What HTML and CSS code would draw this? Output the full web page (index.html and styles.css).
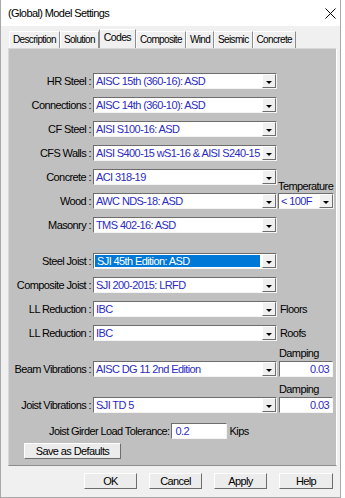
FILE: index.html
```html
<!DOCTYPE html>
<html lang="en">
<head>
  <meta charset="UTF-8">
  <title>(Global) Model Settings</title>
  <link rel="stylesheet" href="styles.css">
</head>
<body>

  <div class="window">
    <div class="titlebar">
      <span class="title">(Global) Model Settings</span>
      <svg class="close" width="11" height="11" viewBox="0 0 11 11">
        <path d="M0.5 0.5 L10.5 10.5 M10.5 0.5 L0.5 10.5" stroke="#000" stroke-width="1" fill="none"/>
      </svg>
    </div>

    <div class="tabs">
      <div class="tab">Description</div>
      <div class="tab">Solution</div>
      <div class="tab active">Codes</div>
      <div class="tab">Composite</div>
      <div class="tab">Wind</div>
      <div class="tab">Seismic</div>
      <div class="tab">Concrete</div>
    </div>

    <div class="panel">
      <div class="row">
        <span class="lbl">HR Steel :</span>
        <div class="combo"><span class="val">AISC 15th (360-16): ASD</span><span class="drop"></span></div>
        <span></span>
      </div>
      <div class="row">
        <span class="lbl">Connections :</span>
        <div class="combo"><span class="val">AISC 14th (360-10): ASD</span><span class="drop"></span></div>
        <span></span>
      </div>
      <div class="row">
        <span class="lbl">CF Steel :</span>
        <div class="combo"><span class="val">AISI S100-16: ASD</span><span class="drop"></span></div>
        <span></span>
      </div>
      <div class="row">
        <span class="lbl">CFS Walls :</span>
        <div class="combo"><span class="val">AISI S400-15 wS1-16 &amp; AISI S240-15</span><span class="drop"></span></div>
        <span></span>
      </div>
      <div class="row">
        <span class="lbl">Concrete :</span>
        <div class="combo"><span class="val">ACI 318-19</span><span class="drop"></span></div>
        <span class="caption temp">Temperature</span>
      </div>
      <div class="row">
        <span class="lbl">Wood :</span>
        <div class="combo"><span class="val">AWC NDS-18: ASD</span><span class="drop"></span></div>
        <div class="combo small"><span class="val">&lt; 100F</span><span class="drop"></span></div>
      </div>
      <div class="row">
        <span class="lbl">Masonry :</span>
        <div class="combo"><span class="val">TMS 402-16: ASD</span><span class="drop"></span></div>
        <span></span>
      </div>

      <div class="row gap-lg">
        <span class="lbl">Steel Joist :</span>
        <div class="combo"><span class="val selected">SJI 45th Edition: ASD</span><span class="drop"></span></div>
        <span></span>
      </div>
      <div class="row">
        <span class="lbl">Composite Joist :</span>
        <div class="combo"><span class="val">SJI 200-2015: LRFD</span><span class="drop"></span></div>
        <span></span>
      </div>
      <div class="row">
        <span class="lbl">LL Reduction :</span>
        <div class="combo"><span class="val">IBC</span><span class="drop"></span></div>
        <span class="side">Floors</span>
      </div>
      <div class="row">
        <span class="lbl">LL Reduction :</span>
        <div class="combo"><span class="val">IBC</span><span class="drop"></span></div>
        <span class="side">Roofs</span>
      </div>

      <div class="row note">
        <span></span><span></span><span class="caption">Damping</span>
      </div>
      <div class="row tight">
        <span class="lbl">Beam Vibrations :</span>
        <div class="combo"><span class="val">AISC DG 11 2nd Edition</span><span class="drop"></span></div>
        <div class="field num">0.03</div>
      </div>
      <div class="row note">
        <span></span><span></span><span class="caption">Damping</span>
      </div>
      <div class="row tight">
        <span class="lbl">Joist Vibrations :</span>
        <div class="combo"><span class="val">SJI TD 5</span><span class="drop"></span></div>
        <div class="field num">0.03</div>
      </div>

      <div class="girder">
        <span>Joist Girder Load Tolerance:</span>
        <div class="field girder-val">0.2</div>
        <span class="unit">Kips</span>
      </div>

      <button class="btn save">Save as Defaults</button>
    </div>

    <div class="buttons">
      <button class="btn">OK</button>
      <button class="btn">Cancel</button>
      <button class="btn">Apply</button>
      <button class="btn help">Help</button>
    </div>
  </div>

</body>
</html>
```

FILE: styles.css
```css
body {
  margin: 0;
  background: #fff;
  font-family: "Liberation Sans", Arial, sans-serif;
  font-size: 11px;
  letter-spacing: -0.6px;
  color: #000;
}
.window {
  width: 341px;
  height: 498px;
  box-sizing: border-box;
  background: #f0f0f0;
  border-left: 1px solid #a8a8a8;
  border-right: 1px solid #a8a8a8;
  border-bottom: 1px solid #a8a8a8;
}
.titlebar {
  height: 26px;
  background: #fff;
  display: flex;
  align-items: center;
  justify-content: space-between;
  padding: 0 4px 0 7px;
}
.title {
  font-size: 11px;
}
.tabs {
  display: flex;
  align-items: flex-end;
  height: 18px;
  padding: 4px 0 0 8px;
}
.tab {
  height: 16px;
  line-height: 16px;
  padding: 0 3px 0 3px;
  font-size: 10px;
  letter-spacing: -0.65px;
  border-left: 1px solid #fff;
  border-top: 1px solid #fff;
  border-right: 1px solid #8c8c8c;
}
.tab.active {
  height: 18px;
  line-height: 15px;
  font-size: 10.5px;
  padding: 0 4px;
  border-left: 1px solid #8c8c8c;
}
.panel {
  margin-left: 7px;
  width: 329px;
  height: 418px;
  box-sizing: border-box;
  background: #c0c0c0;
  border-top: 1px solid #d8d8d8;
  border-left: 1px solid #d8d8d8;
  border-right: 1px solid #fff;
  border-bottom: 1px solid #8c8c8c;
  padding-top: 24px;
}
.row {
  display: grid;
  grid-template-columns: 84px 184px 57px;
  height: 16px;
  margin-top: 8px;
}
.row:first-child {
  margin-top: 0;
}
.row.gap-lg {
  margin-top: 20px;
}
.row.note {
  height: 12px;
  margin-top: 6px;
}
.row.tight {
  margin-top: 2px;
}
.lbl {
  text-align: right;
  padding-right: 2px;
  line-height: 16px;
  white-space: nowrap;
}
.combo {
  display: flex;
  height: 16px;
  box-sizing: border-box;
  background: #fff;
  border: 1px solid;
  border-color: #6d6d6d #f4f4f4 #f4f4f4 #6d6d6d;
}
.combo.small {
  width: 56px;
  margin-left: 1px;
}
.val {
  flex: 1;
  color: #2b2bc4;
  line-height: 14px;
  padding-left: 2px;
  white-space: nowrap;
  overflow: hidden;
}
.val.selected {
  background: #0078d7;
  color: #fff;
  margin: 1px 1px 1px 1px;
  line-height: 12px;
}
.drop {
  width: 12px;
  height: 12px;
  margin: 0 0 0 1px;
  background: #f0f0f0;
  border: 1px solid;
  border-color: #fff #6d6d6d #6d6d6d #fff;
  display: flex;
  align-items: center;
  justify-content: center;
}
.drop::after {
  content: "";
  margin-top: 3px;
  border-left: 3px solid transparent;
  border-right: 3px solid transparent;
  border-top: 3px solid #000;
}
.caption {
  padding-left: 2px;
  line-height: 12px;
  white-space: nowrap;
}
.temp {
  align-self: end;
  margin-bottom: -7px;
  padding-left: 1px;
}
.side {
  padding-left: 3px;
  line-height: 16px;
}
.field {
  height: 16px;
  box-sizing: border-box;
  background: #fff;
  border: 1px solid;
  border-color: #6d6d6d #f4f4f4 #f4f4f4 #6d6d6d;
  color: #2b2bc4;
  line-height: 14px;
}
.field.num {
  width: 54px;
  margin-left: 2px;
  text-align: right;
  padding-right: 3px;
}
.girder {
  display: flex;
  align-items: center;
  height: 16px;
  margin-top: 10px;
  padding-left: 40px;
}
.girder-val {
  width: 56px;
  margin-left: 1px;
  padding-left: 4px;
}
.unit {
  margin-left: 3px;
}
.btn {
  height: 16px;
  box-sizing: border-box;
  padding: 0;
  background: #ececec;
  border: 1px solid;
  border-color: #fff #6d6d6d #6d6d6d #fff;
  font-family: inherit;
  font-size: 11px;
  letter-spacing: -0.6px;
  color: #000;
  line-height: 14px;
}
.btn.save {
  display: block;
  width: 97px;
  margin: 4px 0 0 15px;
}
.buttons {
  display: flex;
  justify-content: flex-end;
  gap: 12px;
  padding: 7px 7px 0 0;
}
.buttons .btn {
  width: 53px;
}
.buttons .help {
  width: 54px;
}
```
